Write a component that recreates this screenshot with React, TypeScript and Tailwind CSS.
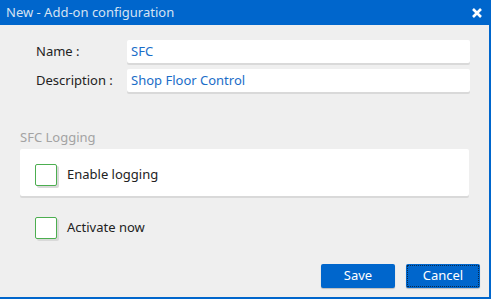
const font = { fontFamily: '"Noto Sans", "Open Sans", sans-serif' };

const Field = ({ label, value }: { label: string; value: string }) => (
    <div className="flex items-center">
        <span className="w-[91px] text-[13px] text-[#222]">{label}</span>
        <div className="flex h-[23px] w-[343px] items-center rounded-[2px] bg-white px-[4px] text-[13px] text-[#1a6dc8] shadow-[0_2px_0_#d9d9d9]">
            {value}
        </div>
    </div>
);

const Check = ({ label }: { label: string }) => (
    <div className="flex items-center gap-[10px]">
        <div className="h-[22px] w-[22px] rounded-[2px] border border-[#4cae50] bg-white shadow-[2px_2px_0_#d9d9d9]" />
        <span className="text-[13px] text-[#222]">{label}</span>
    </div>
);

export default function App() {
    return (
        <div
            style={font}
            className="flex h-[299px] w-[491px] flex-col border-r-2 border-b-2 border-[#0066cc] bg-[#efefef]"
        >
            <div className="flex h-[25px] shrink-0 items-center justify-between bg-[#0066cc] pl-[6px] pr-[7px]">
                <span className="text-[13px] text-[#d5e3f3]">New - Add-on configuration</span>
                <svg width="10" height="10" viewBox="0 0 10 10">
                    <path d="M1 1 L9 9 M9 1 L1 9" stroke="white" strokeWidth="2.6" />
                </svg>
            </div>
            <div className="flex flex-col gap-[6px] pl-[36px] pt-[15px]">
                <Field label="Name :" value="SFC" />
                <Field label="Description :" value="Shop Floor Control" />
            </div>
            <div className="mt-[36px] pl-[20px] text-[13px] text-[#a3a3a3]">SFC Logging</div>
            <div className="ml-[20px] mt-[1px] h-[47px] w-[449px] rounded-[2px] bg-white pl-[15px] pt-[15px] shadow-[0_2px_0_#d9d9d9]">
                <Check label="Enable logging" />
            </div>
            <div className="mt-[21px] pl-[35px]">
                <Check label="Activate now" />
            </div>
            <div className="mt-auto mb-[9px] flex justify-end gap-[11px] pr-[9px]">
                <button className="h-[24px] w-[74px] rounded-[2px] bg-[#0066cc] text-[13px] text-white shadow-[0_1px_1px_#bbb]">
                    Save
                </button>
                <button className="h-[24px] w-[74px] rounded-[2px] bg-[#0066cc] p-[1px] text-[13px] text-white shadow-[0_1px_1px_#bbb]">
                    <span className="flex h-full w-full items-center justify-center border border-dotted border-[#0a2a4a]">
                        Cancel
                    </span>
                </button>
            </div>
        </div>
    );
}
